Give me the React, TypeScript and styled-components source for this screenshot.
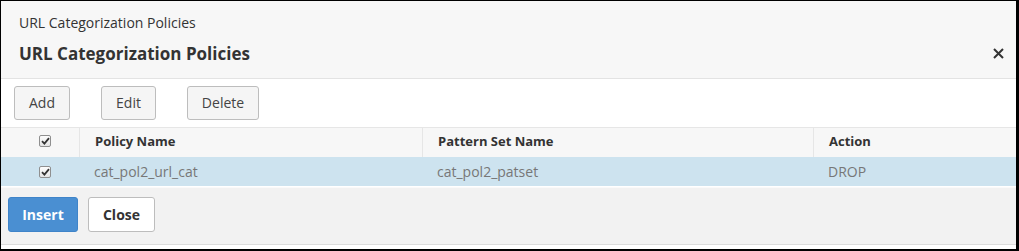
import styled, { createGlobalStyle } from "styled-components";

const GlobalStyle = createGlobalStyle`
  body {
    margin: 0;
    background: #fff;
    font-family: "Open Sans", "Liberation Sans", sans-serif;
  }
`;

const Frame = styled.div`
  width: 1019px;
  height: 251px;
  box-sizing: border-box;
  border-style: solid;
  border-color: #000;
  border-width: 1px 3px 2px 1px;
  display: flex;
  flex-direction: column;
  background: #fff;
  overflow: hidden;
`;

const Header = styled.div`
  height: 77px;
  flex-shrink: 0;
  background: #f7f7f7;
  border-bottom: 1px solid #e3e3e3;
  padding: 0 18px;
  display: flex;
  flex-direction: column;
  position: relative;
`;

const Crumb = styled.div`
  font-size: 14px;
  color: #333;
  margin-top: 13px;
  line-height: 18px;
`;

const Title = styled.h2`
  margin: 10px 0 0;
  font-size: 17px;
  font-weight: 700;
  color: #333;
  line-height: 24px;
`;

const CloseIcon = styled.button`
  position: absolute;
  right: 11px;
  top: 45px;
  width: 14px;
  height: 14px;
  padding: 0;
  border: none;
  background: none;
  display: flex;
  align-items: center;
  justify-content: center;
`;

const Toolbar = styled.div`
  height: 48px;
  flex-shrink: 0;
  box-sizing: border-box;
  padding: 7px 13px 0;
  display: flex;
  gap: 31px;
`;

const ToolButton = styled.button<{ $w: number }>`
  width: ${(p) => p.$w}px;
  height: 34px;
  box-sizing: border-box;
  border: 1px solid #bdbdbd;
  border-radius: 3px;
  background: #f5f5f5;
  color: #444;
  font-family: inherit;
  font-size: 14px;
  padding: 0 0 2px;
`;

const Grid = styled.div`
  display: grid;
  grid-template-columns: 78px 343px 391px 1fr;
`;

const HeadCell = styled.div<{ $center?: boolean }>`
  height: 30px;
  box-sizing: border-box;
  border-top: 1px solid #e6e6e6;
  border-left: ${(p) => (p.$center ? "none" : "1px solid #e6e6e6")};
  background: #f7f7f7;
  display: flex;
  align-items: center;
  justify-content: ${(p) => (p.$center ? "center" : "flex-start")};
  padding: 0 0 3px ${(p) => (p.$center ? "0" : "15px")};
  font-size: 13px;
  font-weight: 700;
  color: #333;
`;

const BodyCell = styled.div<{ $center?: boolean }>`
  height: 29px;
  box-sizing: border-box;
  background: #cde3ef;
  display: flex;
  align-items: center;
  justify-content: ${(p) => (p.$center ? "center" : "flex-start")};
  padding-left: ${(p) => (p.$center ? "0" : "15px")};
  font-size: 14px;
  color: #777;
`;

const Check = styled.span`
  width: 12px;
  height: 12px;
  box-sizing: border-box;
  border: 1px solid #8f8f8f;
  border-radius: 2px;
  background: linear-gradient(#fdfdfd, #e4e4e4);
  display: flex;
  align-items: center;
  justify-content: center;
  margin-left: 10px;
`;

const Footer = styled.div`
  margin-top: 1px;
  height: 58px;
  flex-shrink: 0;
  box-sizing: border-box;
  background: #f2f2f2;
  border-top: 1px solid #fafafa;
  border-bottom: 1px solid #dcdcdc;
  padding: 9px 7px 0;
  display: flex;
  gap: 10px;
  align-items: flex-start;
`;

const ActionButton = styled.button<{ $primary?: boolean; $w: number }>`
  width: ${(p) => p.$w}px;
  height: 35px;
  box-sizing: border-box;
  border-radius: 3px;
  border: 1px solid ${(p) => (p.$primary ? "#3f84c9" : "#bdbdbd")};
  background: ${(p) => (p.$primary ? "#4a8fd2" : "#fff")};
  color: ${(p) => (p.$primary ? "#fff" : "#333")};
  font-family: inherit;
  font-size: 14px;
  font-weight: 700;
  padding: 0 0 1px;
`;

const Tick = () => (
  <svg width="9" height="8" viewBox="0 0 9 8">
    <path d="M1 4.2 L3.4 6.6 L8 1.2" fill="none" stroke="#333" strokeWidth="1.8" />
  </svg>
);

export default function App() {
  return (
    <>
      <GlobalStyle />
      <Frame>
        <Header>
          <Crumb>URL Categorization Policies</Crumb>
          <Title>URL Categorization Policies</Title>
          <CloseIcon aria-label="Close">
            <svg width="11" height="11" viewBox="0 0 11 11">
              <path d="M1 1 L10 10 M10 1 L1 10" stroke="#333" strokeWidth="2" />
            </svg>
          </CloseIcon>
        </Header>
        <Toolbar>
          <ToolButton $w={56}>Add</ToolButton>
          <ToolButton $w={55}>Edit</ToolButton>
          <ToolButton $w={72}>Delete</ToolButton>
        </Toolbar>
        <Grid>
          <HeadCell $center>
            <Check>
              <Tick />
            </Check>
          </HeadCell>
          <HeadCell>Policy Name</HeadCell>
          <HeadCell>Pattern Set Name</HeadCell>
          <HeadCell>Action</HeadCell>
          <BodyCell $center>
            <Check>
              <Tick />
            </Check>
          </BodyCell>
          <BodyCell>cat_pol2_url_cat</BodyCell>
          <BodyCell>cat_pol2_patset</BodyCell>
          <BodyCell>DROP</BodyCell>
        </Grid>
        <Footer>
          <ActionButton $primary $w={70}>Insert</ActionButton>
          <ActionButton $w={67}>Close</ActionButton>
        </Footer>
      </Frame>
    </>
  );
}
